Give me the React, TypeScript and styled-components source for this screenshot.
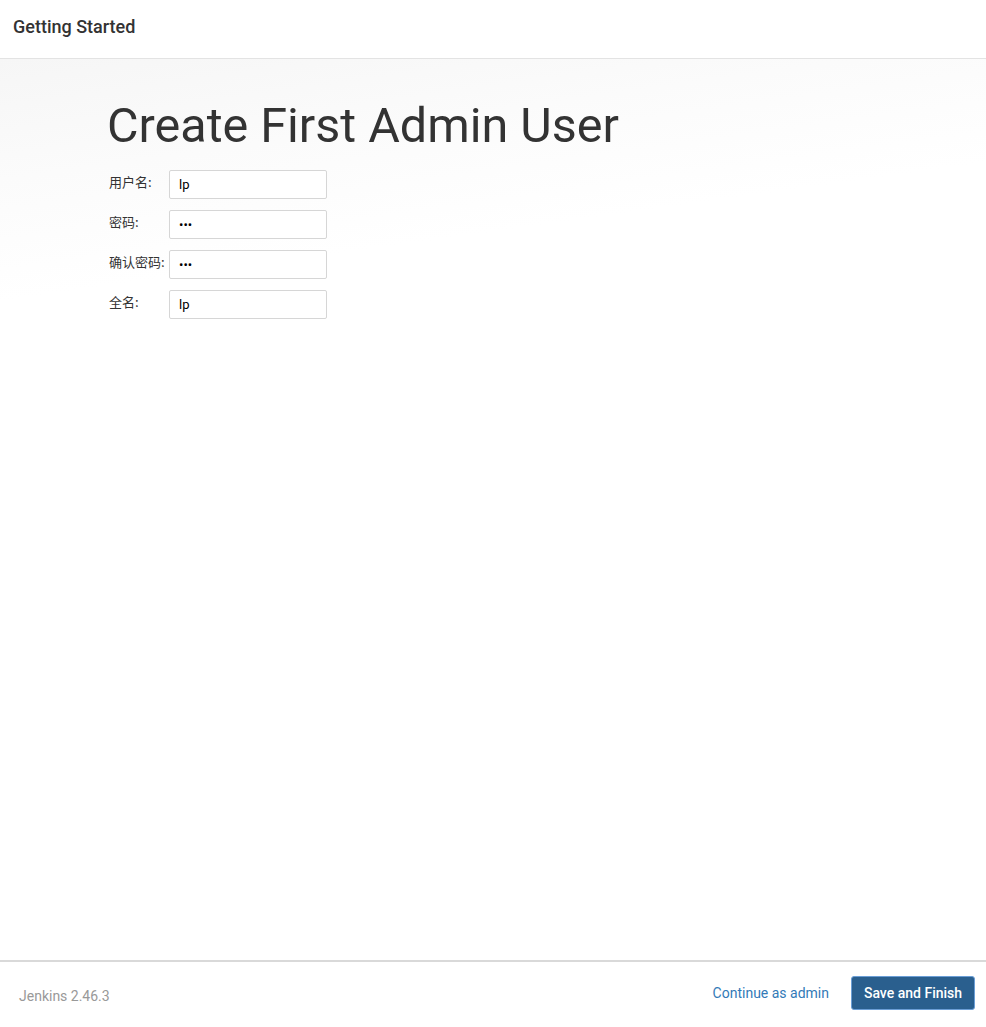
import styled, { createGlobalStyle } from "styled-components";

const GlobalStyle = createGlobalStyle`
  html, body {
    margin: 0;
    padding: 0;
    background: #fff;
  }
  body {
    font-family: Roboto, "Noto Sans CJK SC", sans-serif;
    color: #333;
  }
`;

const Page = styled.div`
  width: 986px;
  height: 1027px;
  display: flex;
  flex-direction: column;
  box-sizing: border-box;
`;

const Header = styled.header`
  height: 59px;
  flex: 0 0 59px;
  box-sizing: border-box;
  border-bottom: 1px solid #e3e3e3;
  display: flex;
  align-items: center;
  padding: 0 13px 6px;
  font-size: 18px;
  font-weight: 500;
  color: #333;
`;

const Main = styled.main`
  flex: 1;
  padding: 41px 104px 0 107px;
  background: linear-gradient(172deg, #f6f6f6 0px, #fbfbfb 120px, #fff 240px);
`;

const Title = styled.h1`
  margin: 0 0 17px;
  font-size: 48.5px;
  line-height: 1.09;
  font-weight: 400;
  color: #333;
`;

const Form = styled.form`
  display: flex;
  flex-direction: column;
  gap: 11px;
  padding-left: 2px;
`;

const Row = styled.div`
  display: flex;
  align-items: flex-start;
`;

const Label = styled.label`
  width: 60px;
  padding-top: 3px;
  font-family: "Noto Sans CJK SC", sans-serif;
  font-size: 13px;
  line-height: 18px;
  color: #333;
  white-space: nowrap;
`;

const Input = styled.input`
  width: 158px;
  height: 29px;
  box-sizing: border-box;
  border: 1px solid #d6d6d6;
  border-radius: 2px;
  padding: 0 9px;
  font-family: Roboto, sans-serif;
  font-size: 13px;
  color: #000;
  background: #fff;
  outline: none;
`;

const Footer = styled.footer`
  flex: 0 0 67px;
  border-top: 2px solid #d9d9d9;
  display: flex;
  align-items: center;
  padding: 0 11px 4px 19px;
  box-sizing: border-box;
`;

const Version = styled.span`
  flex: 1;
  padding-top: 6px;
  font-size: 14px;
  color: #999;
`;

const LinkButton = styled.a`
  font-size: 14px;
  color: #337ab7;
  text-decoration: none;
  margin-right: 22px;
  cursor: pointer;
`;

const PrimaryButton = styled.button`
  width: 124px;
  height: 34px;
  border: 1px solid #6b9ed6;
  border-radius: 3px;
  background: #2a5f8e;
  color: #fff;
  font-family: Roboto, sans-serif;
  font-size: 14px;
  font-weight: 500;
  cursor: pointer;
`;

const fields = [
  { label: "用户名:", type: "text", value: "lp" },
  { label: "密码:", type: "password", value: "lp1" },
  { label: "确认密码:", type: "password", value: "lp1" },
  { label: "全名:", type: "text", value: "lp" },
];

export default function App() {
  return (
    <>
      <GlobalStyle />
      <Page>
        <Header>Getting Started</Header>
        <Main>
          <Title>Create First Admin User</Title>
          <Form onSubmit={(e) => e.preventDefault()}>
            {fields.map((f) => (
              <Row key={f.label}>
                <Label>{f.label}</Label>
                <Input type={f.type} defaultValue={f.value} />
              </Row>
            ))}
          </Form>
        </Main>
        <Footer>
          <Version>Jenkins 2.46.3</Version>
          <LinkButton>Continue as admin</LinkButton>
          <PrimaryButton type="button">Save and Finish</PrimaryButton>
        </Footer>
      </Page>
    </>
  );
}
